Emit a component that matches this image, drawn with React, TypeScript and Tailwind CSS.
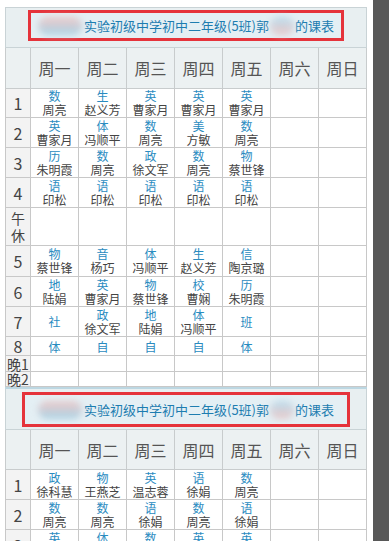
import React from "react"

type Cell = [string, string?] | null

const week = ["周一", "周二", "周三", "周四", "周五", "周六", "周日"]

const tableOne: { label: string; h: string; cells: Cell[] }[] = [
  { label: "1", h: "h-[29px]", cells: [["数", "周亮"], ["生", "赵义芳"], ["英", "曹家月"], ["英", "曹家月"], ["英", "曹家月"]] },
  { label: "2", h: "h-[30px]", cells: [["英", "曹家月"], ["体", "冯顺平"], ["数", "周亮"], ["美", "方敏"], ["数", "周亮"]] },
  { label: "3", h: "h-[30px]", cells: [["历", "朱明霞"], ["数", "周亮"], ["政", "徐文军"], ["数", "周亮"], ["物", "蔡世锋"]] },
  { label: "4", h: "h-[30px]", cells: [["语", "印松"], ["语", "印松"], ["语", "印松"], ["语", "印松"], ["语", "印松"]] },
  { label: "午休", h: "h-[38px]", cells: [] },
  { label: "5", h: "h-[31px]", cells: [["物", "蔡世锋"], ["音", "杨巧"], ["体", "冯顺平"], ["生", "赵义芳"], ["信", "陶京璐"]] },
  { label: "6", h: "h-[30px]", cells: [["地", "陆娟"], ["英", "曹家月"], ["物", "蔡世锋"], ["校", "曹娴"], ["历", "朱明霞"]] },
  { label: "7", h: "h-[30px]", cells: [["社"], ["政", "徐文军"], ["地", "陆娟"], ["体", "冯顺平"], ["班"]] },
  { label: "8", h: "h-[19px]", cells: [["体"], ["自"], ["自"], ["自"], ["体"]] },
  { label: "晚1", h: "h-[16px]", cells: [] },
  { label: "晚2", h: "h-[15px]", cells: [] },
]

const tableTwo: { label: string; h: string; cells: Cell[] }[] = [
  { label: "1", h: "h-[30px]", cells: [["政", "徐科慧"], ["物", "王燕芝"], ["英", "温志蓉"], ["语", "徐娟"], ["数", "周亮"]] },
  { label: "2", h: "h-[30px]", cells: [["数", "周亮"], ["数", "周亮"], ["语", "徐娟"], ["数", "周亮"], ["语", "徐娟"]] },
  { label: "3", h: "h-[30px]", cells: [["英", "温志蓉"], ["体", "冯顺平"], ["数", "周亮"], ["英", "温志蓉"], ["英", "温志蓉"]] },
]

function Title({ box }: { box: string }) {
  return (
    <div className={`flex items-center justify-center border-[3px] border-[#e5333b] bg-[#e4eff4] ${box}`}>
      {/* blurred school name */}
      <span className="mr-[2px] h-[18px] w-[44px] rounded-full bg-linear-to-b from-[#ecc8c8] to-[#a8d3e6] blur-[3px]" />
      <span className="text-[13px] leading-none text-[#1d7db0]">实验初级中学初中二年级(5班)郭</span>
      <span className="mx-[1px] h-[18px] w-[24px] rounded-full bg-linear-to-b from-[#b9dced] to-[#e9c8c8] blur-[3px]" />
      <span className="text-[13px] leading-none text-[#1d7db0]">的课表</span>
    </div>
  )
}

function Timetable({ rows, titleH, headH, box, top }: { rows: typeof tableOne; titleH: string; headH: string; box: string; top: string }) {
  return (
    <table className={`w-[361px] table-fixed border-collapse ${top}`}>
      <colgroup>
        <col className="w-[25px]" />
        {week.map((d) => (
          <col key={d} className="w-[48px]" />
        ))}
      </colgroup>
      <tbody>
        <tr className={titleH}>
          <td colSpan={8} className="border border-[#c9d3d6] bg-[#e8eff1] p-0">
            <Title box={box} />
          </td>
        </tr>
        <tr className={headH}>
          <td className="border border-[#c8cccd] bg-[#ecf1f2]" />
          {week.map((d) => (
            <td key={d} className="border border-[#c8cccd] bg-[#ecf1f2] text-center text-[16px] text-[#555]">
              {d}
            </td>
          ))}
        </tr>
        {rows.map((r) => (
          <tr key={r.label} className={r.h}>
            <td className={`border border-[#c8c8c8] bg-[#f3f3f3] p-0 text-center text-[#444] ${r.label.length > 1 ? "text-[14px] leading-[14px]" : "text-[16px] leading-none"}`}>
              {r.label === "午休" ? (
                <span className="flex flex-col leading-[17px]">
                  <span>午</span>
                  <span>休</span>
                </span>
              ) : (
                r.label
              )}
            </td>
            {week.map((d, i) => {
              const c = r.cells[i]
              return (
                <td key={d} className="border border-[#c8c8c8] bg-white p-0 text-center align-middle">
                  {c && (
                    <div className="flex flex-col items-center">
                      <span className="text-[12px] leading-[13px] text-[#2a8bbf]">{c[0]}</span>
                      {c[1] && <span className="text-[12px] leading-[15px] text-[#444]">{c[1]}</span>}
                    </div>
                  )}
                </td>
              )
            })}
          </tr>
        ))}
      </tbody>
    </table>
  )
}

export default function App() {
  return (
    <div
      className="flex h-[541px] w-[389px] overflow-hidden bg-white"
      style={{ fontFamily: '"Noto Sans CJK SC", "Noto Sans", sans-serif' }}
    >
      <div className="flex-1 pl-[5px] pt-[7px]">
        <Timetable rows={tableOne} titleH="h-[40px]" headH="h-[41px]" box="mx-[22px] mt-[2px] mb-[6px] h-[31px]" top="" />
        <Timetable rows={tableTwo} titleH="h-[41px]" headH="h-[40px]" box="mx-[16px] mt-[3px] mb-[2px] h-[35px]" top="border-t-2 border-[#bcd7e2]" />
      </div>
      <div className="w-[16px] shrink-0 bg-[#585858]" />
    </div>
  )
}
